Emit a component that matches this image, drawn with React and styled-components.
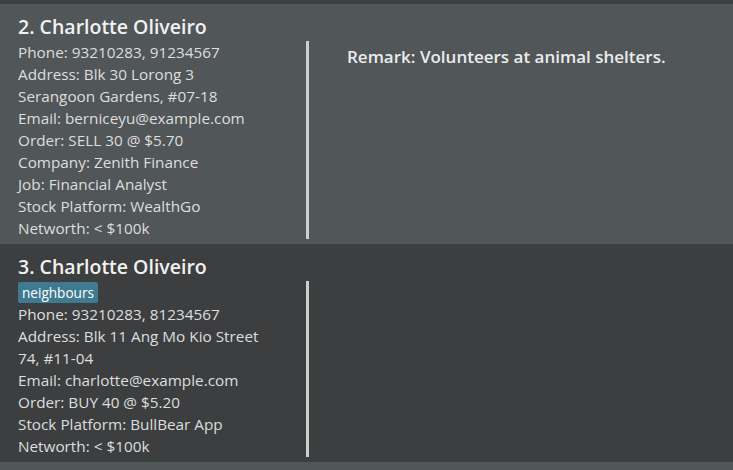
import React from "react";
import styled, { createGlobalStyle } from "styled-components";

const GlobalStyle = createGlobalStyle`
  html, body {
    margin: 0;
    padding: 0;
    background: #3c3e40;
    overflow: hidden;
  }
  * {
    box-sizing: border-box;
  }
`;

const persons = [
  {
    index: 2,
    name: "Charlotte Oliveiro",
    tags: [],
    details: [
      "Phone: 93210283, 91234567",
      "Address: Blk 30 Lorong 3 Serangoon Gardens, #07-18",
      "Email: berniceyu@example.com",
      "Order: SELL 30 @ $5.70",
      "Company: Zenith Finance",
      "Job: Financial Analyst",
      "Stock Platform: WealthGo",
      "Networth: < $100k"
    ],
    remark: "Volunteers at animal shelters."
  },
  {
    index: 3,
    name: "Charlotte Oliveiro",
    tags: ["neighbours"],
    details: [
      "Phone: 93210283, 81234567",
      "Address: Blk 11 Ang Mo Kio Street 74, #11-04",
      "Email: charlotte@example.com",
      "Order: BUY 40 @ $5.20",
      "Stock Platform: BullBear App",
      "Networth: < $100k"
    ],
    remark: ""
  }
];

export default function App() {
  return (
    <List>
      <GlobalStyle />
      <Spacer />
      {persons.map((p, i) => (
        <Card key={p.index} odd={i % 2 === 0}>
          <Name>
            {p.index}. {p.name}
          </Name>
          <Row>
            <Details>
              {p.tags.length > 0 && (
                <Tags>
                  {p.tags.map(t => (
                    <Tag key={t}>{t}</Tag>
                  ))}
                </Tags>
              )}
              {p.details.map(d => (
                <Label key={d}>{d}</Label>
              ))}
            </Details>
            <Remark>{p.remark && `Remark: ${p.remark}`}</Remark>
          </Row>
        </Card>
      ))}
      <Card odd />
    </List>
  );
}

const List = styled.div`
  width: 733px;
  height: 470px;
  display: flex;
  flex-direction: column;
  background: #3c3e40;
  font-family: "Open Sans", "Noto Sans", sans-serif;
  overflow: hidden;
`;

const Spacer = styled.div`
  height: 4px;
  flex-shrink: 0;
`;

const Card = styled.div`
  flex-shrink: 0;
  background: ${({ odd }) => (odd ? "#515658" : "#3c3e40")};
  padding: 9px 0 5px 18px;
  min-height: 10px;
`;

const Name = styled.div`
  font-size: 19.5px;
  font-weight: 600;
  line-height: 27px;
  color: #f2f2f2;
`;

const Row = styled.div`
  display: flex;
  align-items: stretch;
`;

const Details = styled.div`
  width: 291px;
  flex-shrink: 0;
  padding-right: 40px;
  border-right: 3px solid #cfcfcf;
  margin-top: 1px;
`;

const Label = styled.div`
  font-size: 15.3px;
  line-height: 22px;
  color: #dedede;
`;

const Tags = styled.div`
  display: flex;
  gap: 4px;
  padding-top: 1px;
`;

const Tag = styled.span`
  background: #3e7b91;
  color: #ffffff;
  font-size: 13.6px;
  line-height: 21px;
  padding: 0 4px;
  border-radius: 2px;
`;

const Remark = styled.div`
  padding: 5px 0 0 38px;
  font-size: 17px;
  font-weight: 600;
  line-height: 24px;
  color: #ececec;
`;
